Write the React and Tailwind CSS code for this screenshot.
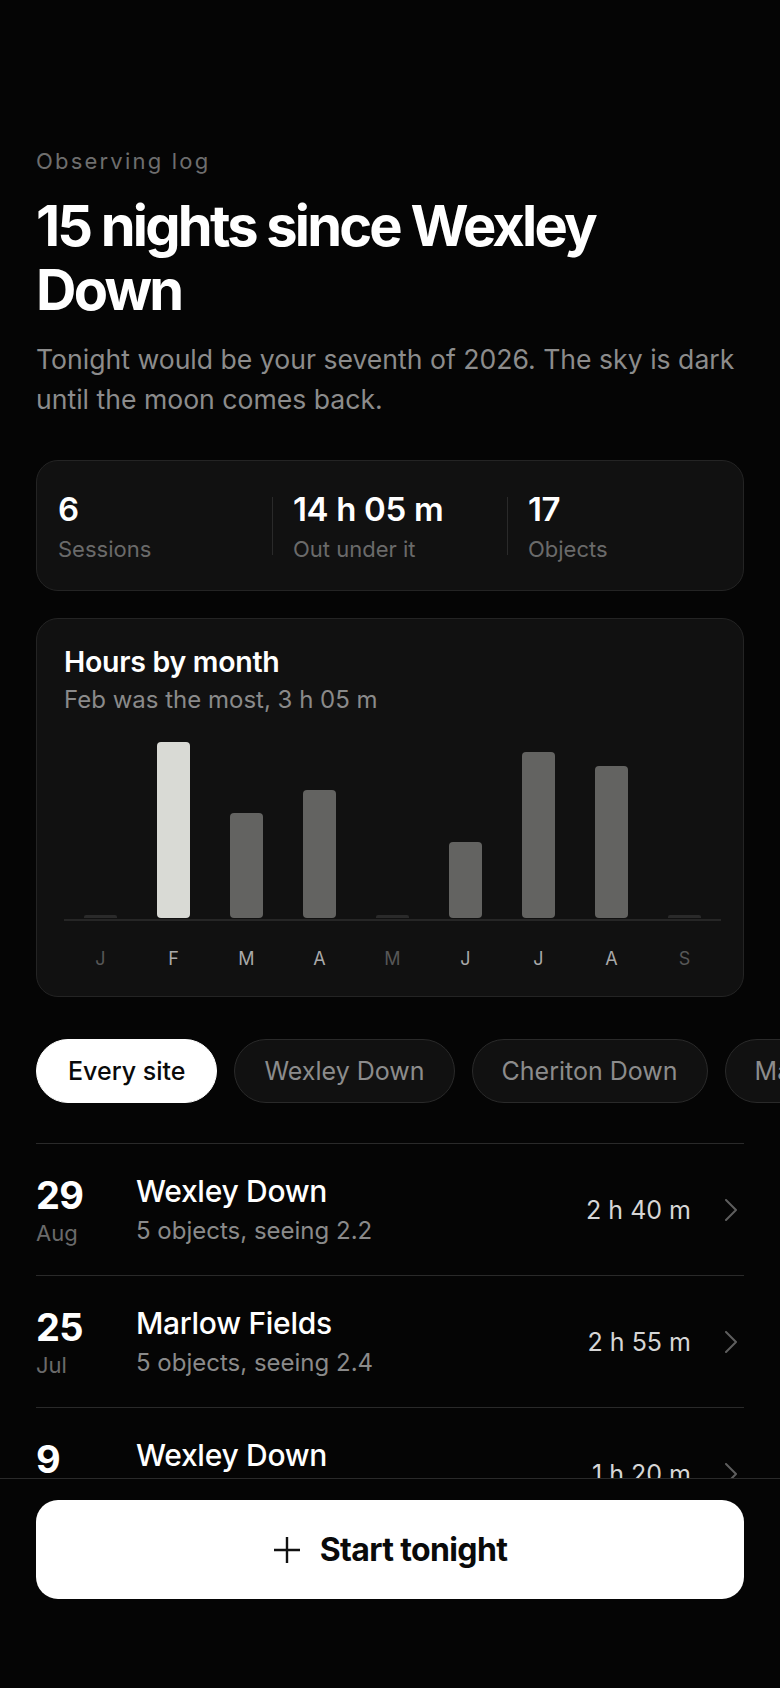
import { ChevronRight } from 'lucide-react';

const months = [
  { m: 'J', min: 0 },
  { m: 'F', min: 185 },
  { m: 'M', min: 110 },
  { m: 'A', min: 135 },
  { m: 'M', min: 0 },
  { m: 'J', min: 80 },
  { m: 'J', min: 175 },
  { m: 'A', min: 160 },
  { m: 'S', min: 0 },
];

const sessions = [
  { day: '29', mon: 'Aug', site: 'Wexley Down', note: '5 objects, seeing 2.2', dur: '2 h 40 m' },
  { day: '25', mon: 'Jul', site: 'Marlow Fields', note: '5 objects, seeing 2.4', dur: '2 h 55 m' },
  { day: '9', mon: 'Jun', site: 'Wexley Down', note: '4 objects, seeing 2.8', dur: '1 h 20 m' },
  { day: '14', mon: 'Apr', site: 'Cheriton Down', note: '3 objects, seeing 3.1', dur: '2 h 15 m' },
];

const sites = ['Every site', 'Wexley Down', 'Cheriton Down', 'Marlow Fields'];

const Stat = ({ value, label }) => (
  <div className="flex-1 flex flex-col">
    <span className="text-[33px] leading-[40px] font-semibold text-white tracking-[-0.01em]">{value}</span>
    <span className="mt-[6px] text-[22px] leading-[28px] text-[#6a6a6a]">{label}</span>
  </div>
);

const Divider = () => <div className="w-px h-[58px] self-center bg-[#2a2a2a]" />;

const App = () => {
  const max = 185;
  return (
    <div
      className="relative h-[1688px] overflow-hidden bg-[#050505] text-white"
      style={{ fontFamily: 'Inter, "Noto Sans", sans-serif' }}
    >
      <div className="px-9 pt-[147px]">
        <p className="text-[22px] leading-[28px] tracking-[0.1em] text-[#6e6e6e]">Observing log</p>
        <h1 className="mt-[19px] text-[56px] leading-[64px] font-bold tracking-[-0.05em] text-white">
          15 nights since Wexley Down
        </h1>
        <p className="mt-[17px] text-[26.6px] leading-[40px] text-[#8c8c8c]">
          Tonight would be your seventh of 2026. The sky is dark until the moon comes back.
        </p>

        {/* stats */}
        <div className="mt-[41px] flex gap-5 rounded-[22px] border border-[#242424] bg-[#111111] px-[21px] pt-[28px] pb-[27px]">
          <Stat value="6" label="Sessions" />
          <Divider />
          <Stat value="14 h 05 m" label="Out under it" />
          <Divider />
          <Stat value="17" label="Objects" />
        </div>

        {/* chart */}
        <div className="mt-[27px] rounded-[22px] border border-[#242424] bg-[#111111] pl-[27px] pr-[22px] pt-[26px] pb-[25px]">
          <h2 className="text-[28.5px] leading-[34px] font-semibold tracking-[-0.01em] text-white">Hours by month</h2>
          <p className="mt-[6px] text-[24px] leading-[30px] text-[#8a8a8a]">Feb was the most, 3 h 05 m</p>
          <div className="mt-[23px] grid grid-cols-9 h-[180px] items-end">
            {months.map((d, i) => (
              <div key={i} className="flex justify-center">
                {d.min > 0 ? (
                  <div
                    className={`w-[33px] rounded-[4px] ${i === 1 ? 'bg-[#d9dad5]' : 'bg-[#636361]'}`}
                    style={{ height: Math.round((d.min / max) * 176) }}
                  />
                ) : (
                  <div className="w-[33px] h-[3px] rounded-t-[2px] bg-[#2a2a2a]" />
                )}
              </div>
            ))}
          </div>
          <div className="mt-[1px] h-[2px] bg-[#262626]" />
          <div className="mt-[26px] grid grid-cols-9">
            {months.map((d, i) => (
              <span
                key={i}
                className={`text-center text-[18px] leading-[24px] ${d.min > 0 ? 'text-[#a9a9a9]' : 'text-[#575757]'}`}
              >
                {d.m}
              </span>
            ))}
          </div>
        </div>

        {/* site filter */}
        <div className="mt-[42px] -mr-9 flex gap-[17px] overflow-hidden whitespace-nowrap">
          {sites.map((s, i) => (
            <button
              key={s}
              className={`shrink-0 rounded-full border py-[15px] text-[25px] leading-[32px] ${
                i === 0
                  ? 'border-white bg-white text-[#0a0a0a] font-medium px-[31px]'
                  : 'border-[#2a2a2a] bg-[#111111] text-[#8c8c8c] px-[29px]'
              }`}
            >
              {s}
            </button>
          ))}
        </div>

        {/* sessions */}
        <div className="mt-[40px] border-t border-[#2a2a2a]">
          {sessions.map((s, i) => (
            <div key={i} className="flex items-center border-b border-[#2a2a2a] pt-[29px] pb-[28px]">
              <div className="w-[100px] flex flex-col">
                <span className="text-[38px] leading-[42px] font-bold tracking-[-0.02em] text-white">{s.day}</span>
                <span className="mt-[3px] text-[22px] leading-[28px] text-[#6a6a6a]">{s.mon}</span>
              </div>
              <div className="flex-1 flex flex-col">
                <span className="text-[30px] leading-[36px] font-medium tracking-[-0.01em] text-white">{s.site}</span>
                <span className="mt-[6px] text-[24px] leading-[32px] text-[#8a8a8a]">{s.note}</span>
              </div>
              <span className="text-[25px] leading-[30px] text-[#d6d6d6]">{s.dur}</span>
              <svg width="14" height="22" viewBox="0 0 14 22" className="ml-[33px] mr-[6px]" fill="none">
                <polyline points="2,1 12,11 2,21" stroke="#5e5e5e" strokeWidth="2" strokeLinecap="round" strokeLinejoin="round" />
              </svg>
            </div>
          ))}
        </div>
      </div>

      {/* bottom action bar */}
      <div className="absolute bottom-0 inset-x-0 border-t border-[#2a2a2a] bg-[#050505] px-9 pt-[21px] pb-[89px]">
        <button className="w-full h-[99px] rounded-[22px] bg-white flex items-center justify-center gap-[19px] text-[#0a0a0a]">
          <svg width="28" height="28" viewBox="0 0 28 28" fill="none">
            <path d="M14 1v26M1 14h26" stroke="#111111" strokeWidth="2.4" />
          </svg>
          <span className="text-[32px] leading-[38px] font-bold tracking-[-0.02em]">Start tonight</span>
        </button>
      </div>
    </div>
  );
};

export default App;
